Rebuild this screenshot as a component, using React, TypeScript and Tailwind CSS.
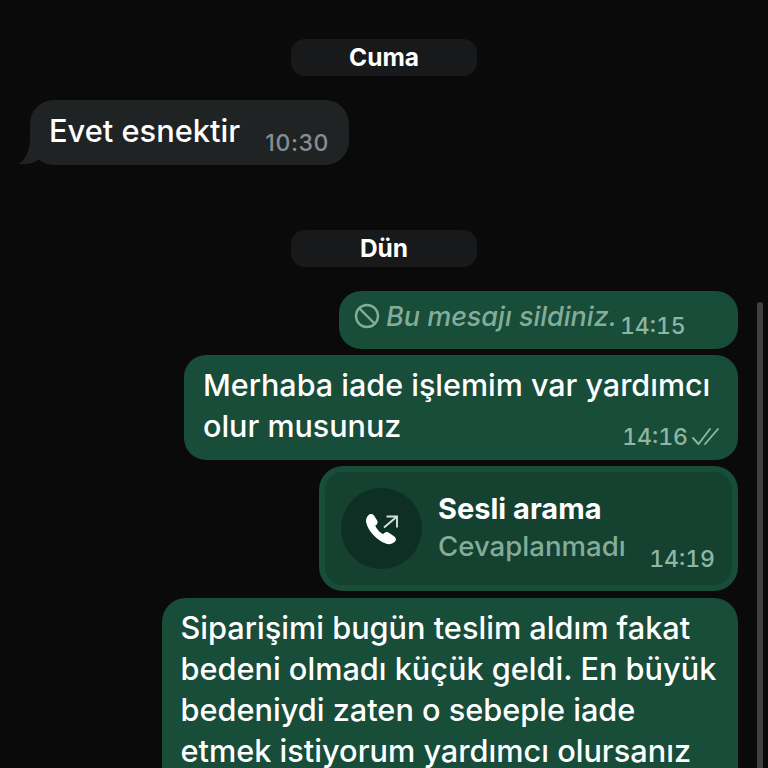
const font = { fontFamily: "Inter, 'Noto Sans', sans-serif" };

function Tail() {
  return (
    <svg className="absolute left-[-12px] bottom-0" width="30" height="26" viewBox="0 0 30 26">
      <path d="M12 0 C12 10 8 20 1 25 C7 26 14 25 20 21 L30 0 Z" fill="#202324" />
    </svg>
  );
}

function DatePill({ label }: { label: string }) {
  return (
    <div className="w-[186px] h-[37px] rounded-[14px] bg-[#17191a] flex items-center justify-center text-white font-bold text-[24.5px]">
      {label}
    </div>
  );
}

function Ticks() {
  return (
    <svg width="30" height="20" viewBox="0 0 30 20" fill="none" stroke="#8fb5a3" strokeWidth="1.9" strokeLinecap="round" strokeLinejoin="round">
      <path d="M2 11 L7.5 17 L19 2" />
      <path d="M14 17 L27 2" />
    </svg>
  );
}

function BanIcon() {
  return (
    <svg width="26" height="26" viewBox="0 0 26 26" fill="none" stroke="#84ac9a" strokeWidth="2.4" className="shrink-0">
      <circle cx="13" cy="13" r="11" />
      <path d="M5.5 5.5 L20.5 20.5" />
    </svg>
  );
}

function CallIcon() {
  return (
    <svg width="34" height="34" viewBox="0 0 34 34">
      <path
        d="M4 3.5 C5.5 2 7.5 2.2 8.5 3.8 L11.5 8.5 C12.4 10 12 11.4 10.8 12.5 L9.6 13.6 C10.8 16.6 14.6 21 18.2 22.8 L19.8 21.4 C21 20.4 22.4 20.3 23.6 21.2 L29 25 C30.6 26.2 30.8 28 29.4 29.4 C27 31.6 24 32 21 31 C12.5 28 4 19 2 11 C1.2 8 2 5.4 4 3.5 Z"
        fill="#ffffff"
        stroke="#ffffff"
        strokeWidth="1.2"
        strokeLinejoin="round"
      />
      <path d="M19 15.5 L32 4.5 M21.5 4.5 H32 V15.5" fill="none" stroke="#d4e2dc" strokeWidth="1.9" />
    </svg>
  );
}

export default function App() {
  return (
    <div className="relative w-[768px] h-[768px] overflow-hidden bg-[#0a0a0a] flex flex-col *:shrink-0" style={font}>
      <div className="self-center mt-[39px]">
        <DatePill label="Cuma" />
      </div>

      <div className="relative self-start ml-[30px] mt-[24px] w-[319px] h-[65px] bg-[#202324] rounded-[24px] pl-[19px] pr-[20px] flex justify-between">
        <Tail />
        <span className="relative text-white text-[30.8px] leading-[40px] mt-[11px] font-medium">Evet esnektir</span>
        <span className="relative text-[#8a8d8e] text-[23px] leading-[28px] mt-[29px] tracking-[0.6px] font-medium">10:30</span>
      </div>

      <div className="self-center mt-[65px] mb-[24px]">
        <DatePill label="Dün" />
      </div>

      <div className="self-end mr-[30px] w-[399px] h-[58px] bg-[#184d39] rounded-[22px] pl-[15px] flex items-start">
        <div className="mt-[12px]"><BanIcon /></div>
        <span className="ml-[6px] mt-[9px] text-[#84ac9a] italic text-[27px] leading-[34px] font-medium">Bu mesajı sildiniz.</span>
        <span className="ml-[3px] mt-[21px] text-[#8fb5a3] text-[23px] leading-[28px] tabular-nums font-medium">14:15</span>
      </div>

      <div className="self-end mr-[30px] mt-[6px] w-[554px] h-[105px] bg-[#184d39] rounded-[22px] pl-[19px] pr-[18px] relative">
        <p className="text-white text-[30.5px] leading-[41px] mt-[9px] font-medium">
          Merhaba iade işlemim var yardımcı<br />olur musunuz
        </p>
        <div className="absolute right-[17px] bottom-[9px] flex items-center gap-[3px] text-[#8fb5a3] text-[23px] leading-[28px] tabular-nums font-medium">
          14:16
          <Ticks />
        </div>
      </div>

      <div className="self-end mr-[30px] mt-[6px] w-[419px] h-[125px] bg-[#184d39] rounded-[24px] p-[6px]">
        <div className="h-full rounded-[18px] bg-[#154131] flex pl-[16px] relative">
          <div className="mt-[16px] w-[81px] h-[81px] rounded-full bg-[#0e2f23] flex items-center justify-center shrink-0">
            <CallIcon />
          </div>
          <div className="ml-[16px] flex flex-col">
            <span className="text-white font-bold text-[29px] leading-[36px] mt-[19px]">Sesli arama</span>
            <span className="text-[#84ac9a] text-[27.6px] leading-[36px] mt-[1px] font-medium">Cevaplanmadı</span>
          </div>
          <span className="absolute right-[17px] bottom-[12px] text-[#8fb5a3] text-[23px] leading-[28px] tabular-nums font-medium">14:19</span>
        </div>
      </div>

      <div className="self-end mr-[30px] mt-[7px] w-[576px] bg-[#184d39] rounded-[24px] pl-[19px] pr-[18px] pt-[9px] pb-[40px]">
        <p className="text-white text-[30.7px] leading-[41px] font-medium -ml-[0.5px]">
          Siparişimi bugün teslim aldım fakat<br />
          bedeni olmadı küçük geldi. En büyük<br />
          bedeniydi zaten o sebeple iade<br />
          etmek istiyorum yardımcı olursanız
        </p>
      </div>

      <div className="absolute left-[757px] top-[302px] w-[6px] h-[480px] rounded-full bg-[#3f4040]" />
    </div>
  );
}
